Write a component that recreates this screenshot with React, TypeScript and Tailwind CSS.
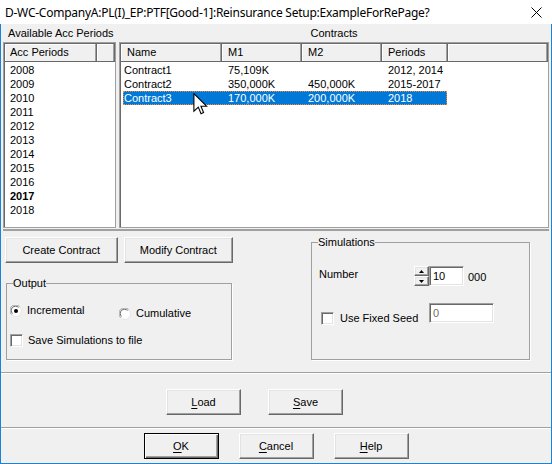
import React from 'react';

const b3d =
  'flex items-center justify-center bg-[#f0f0f0] border border-t-white border-l-white border-r-[#696969] border-b-[#696969] shadow-[inset_-1px_-1px_0_#a0a0a0,inset_1px_1px_0_#e3e3e3]';
const sunken =
  'bg-white border border-t-[#a0a0a0] border-l-[#a0a0a0] border-r-white border-b-white shadow-[inset_1px_1px_0_#696969,inset_-1px_-1px_0_#e3e3e3]';
const hcell =
  'h-full flex items-center border-r border-[#696969] shadow-[inset_-1px_0_0_#a0a0a0,inset_1px_1px_0_#fff]';

function Radio({ checked }: { checked?: boolean }) {
  return (
    <svg width="12" height="12" viewBox="0 0 12 12" className="shrink-0">
      <circle cx="6" cy="6" r="5.5" fill="#fff" stroke="#e3e3e3" />
      <path d="M1.5 9.5 A5.5 5.5 0 0 1 9.5 1.5" fill="none" stroke="#a0a0a0" />
      <path d="M2.5 8.5 A4.2 4.2 0 0 1 8.5 2.5" fill="none" stroke="#696969" />
      {checked && <circle cx="6" cy="6" r="2" fill="#000" />}
    </svg>
  );
}

function Check() {
  return <div className={`w-[13px] h-[13px] shrink-0 ${sunken}`} />;
}

function U({ c }: { c: string }) {
  return <span className="underline underline-offset-2">{c}</span>;
}

const years = ['2008', '2009', '2010', '2011', '2012', '2013', '2014', '2015', '2016', '2017', '2018'];
const contracts = [
  { n: 'Contract1', m1: '75,109K', m2: '', p: '2012, 2014', sel: false },
  { n: 'Contract2', m1: '350,000K', m2: '450,000K', p: '2015-2017', sel: false },
  { n: 'Contract3', m1: '170,000K', m2: '200,000K', p: '2018', sel: true },
];

export default function App() {
  return (
    <div className="relative w-[552px] h-[464px] flex flex-col overflow-hidden bg-[#f0f0f0] text-black text-[11px] leading-[13px] font-['Liberation_Sans',Arial,sans-serif]">
      {/* Title bar */}
      <div className="h-[24px] shrink-0 bg-white flex items-center justify-between pl-[5px]">
        <span className="text-[12px] font-['Noto_Sans','Open_Sans',sans-serif] tracking-[-0.25px]">
          D-WC-CompanyA:PL(I)_EP:PTF[Good-1]:Reinsurance Setup:ExampleForRePage?
        </span>
        <div className="w-[32px] h-[24px] flex items-center justify-center">
          <svg width="11" height="11" viewBox="0 0 11 11">
            <path d="M0.5 0.5L10.5 10.5M10.5 0.5L0.5 10.5" stroke="#000" strokeWidth="1" />
          </svg>
        </div>
      </div>

      {/* Body */}
      <div className="flex-1 flex flex-col border-x border-b border-[#1883d7]">
        {/* Top panes */}
        <div className="flex h-[204px] shrink-0">
          <div className="ml-[2px] w-[113px] flex flex-col">
            <div className="h-[18px] flex items-center pl-[5px]">Available Acc Periods</div>
            <div className="flex-1 flex flex-col bg-white border border-[#a0a0a0] shadow-[inset_1px_1px_0_#696969]">
              <div className="h-[18px] flex border-b border-[#696969] bg-[#f0f0f0] ml-[1px] mt-[1px]">
                <div className={`${hcell} w-[92px] pl-[5px]`}>Acc Periods</div>
                <div className={`${hcell} flex-1`} />
              </div>
              <div className="pt-[1px] flex flex-col">
                {years.map((y) => (
                  <div key={y} className={`h-[14px] leading-[14px] pl-[6px] ${y === '2017' ? 'font-bold' : ''}`}>
                    {y}
                  </div>
                ))}
              </div>
            </div>
          </div>
          <div className="ml-[3px] w-[430px] flex flex-col">
            <div className="h-[18px] flex items-center justify-center">Contracts</div>
            <div className="flex-1 flex flex-col bg-white border border-[#a0a0a0] shadow-[inset_1px_1px_0_#696969]">
              <div className="h-[18px] flex border-b border-[#696969] bg-[#f0f0f0] ml-[1px] mt-[1px]">
                <div className={`${hcell} w-[101px] pl-[6px]`}>Name</div>
                <div className={`${hcell} w-[80px] pl-[6px]`}>M1</div>
                <div className={`${hcell} w-[80px] pl-[6px]`}>M2</div>
                <div className={`${hcell} w-[66px] pl-[6px]`}>Periods</div>
                <div className={`${hcell} flex-1`} />
              </div>
              <div className="pt-[1px] flex flex-col">
                {contracts.map((c) => (
                  <div
                    key={c.n}
                    className={`ml-[3px] w-[324px] h-[14px] leading-[12px] flex border ${
                      c.sel ? 'bg-[#0078d7] text-white border-dotted border-[#ff8728]' : 'border-transparent'
                    }`}
                  >
                    <div className="w-[97px]">{c.n}</div>
                    <div className="w-[80px] pl-[7px]">{c.m1}</div>
                    <div className="w-[80px] pl-[7px]">{c.m2}</div>
                    <div className="flex-1 pl-[7px]">{c.p}</div>
                  </div>
                ))}
              </div>
            </div>
          </div>
        </div>

        {/* Splitter */}
        <div className="h-[5px] shrink-0 pt-[1px] px-[2px]">
          <div className="h-[2px] bg-[#a0a0a0]" />
        </div>

        {/* Middle */}
        <div className="h-[139px] shrink-0 flex">
          <div className="ml-[4px] w-[228px] flex flex-col">
            <div className="mt-[4px] flex gap-[6px]">
              <div className={`${b3d} w-[113px] h-[26px]`}>Create Contract</div>
              <div className={`${b3d} w-[110px] h-[26px]`}>Modify Contract</div>
            </div>
            <fieldset className="mt-[14px] ml-[1px] w-[226px] h-[83px] border border-[#a0a0a0] shadow-[1px_1px_0_#fff] min-w-0">
              <legend className="ml-[6px] px-0 leading-[13px] bg-[#f0f0f0]">Output</legend>
              <div className="pl-[3px] flex flex-col">
                <div className="mt-[14px] flex items-start">
                  <div className="w-[109px] flex items-center gap-[5px]">
                    <Radio checked />
                    <span>Incremental</span>
                  </div>
                  <div className="mt-[3px] flex items-center gap-[5px]">
                    <Radio />
                    <span>Cumulative</span>
                  </div>
                </div>
                <div className="mt-[14px] flex items-center gap-[5px]">
                  <Check />
                  <span>Save Simulations to file</span>
                </div>
              </div>
            </fieldset>
          </div>
          <fieldset className="ml-[78px] mt-[3px] w-[219px] h-[124px] border border-[#a0a0a0] shadow-[1px_1px_0_#fff] min-w-0">
            <legend className="ml-[6px] px-0 leading-[13px] bg-[#f0f0f0]">Simulations</legend>
            <div className="flex flex-col">
              <div className="mt-[17px] flex items-start">
                <div className="w-[102px] pl-[7px] mt-[2px]">Number</div>
                <div className="flex flex-col w-[15px]">
                  <div className={`${b3d} h-[10px]`}>
                    <svg width="5" height="3" viewBox="0 0 5 3">
                      <path d="M2.5 0L5 3H0z" fill="#000" />
                    </svg>
                  </div>
                  <div className={`${b3d} h-[10px]`}>
                    <svg width="5" height="3" viewBox="0 0 5 3">
                      <path d="M0 0H5L2.5 3z" fill="#000" />
                    </svg>
                  </div>
                </div>
                <div className={`${sunken} w-[35px] h-[20px] pl-[3px] flex items-center`}>10</div>
                <div className="ml-[4px] mt-[5px]">000</div>
              </div>
              <div className="mt-[17px] flex items-start">
                <div className="w-[117px] pl-[9px] mt-[9px] flex items-center gap-[6px]">
                  <Check />
                  <span>Use Fixed Seed</span>
                </div>
                <div className={`${sunken} w-[65px] h-[20px] pl-[3px] flex items-center text-[#6d6d6d]`}>0</div>
              </div>
            </div>
          </fieldset>
        </div>

        {/* Separator */}
        <div className="h-[2px] shrink-0 border-t border-[#a0a0a0] border-b border-b-white" />

        {/* Load / Save */}
        <div className="h-[53px] shrink-0 flex items-start pt-[15px] pl-[165px] gap-[27px]">
          <div className={`${b3d} w-[75px] h-[26px]`}>
            <span>
              <U c="L" />
              oad
            </span>
          </div>
          <div className={`${b3d} w-[75px] h-[26px]`}>
            <span>
              <U c="S" />
              ave
            </span>
          </div>
        </div>

        {/* Separator */}
        <div className="h-[2px] shrink-0 border-t border-[#a0a0a0] border-b border-b-white" />

        {/* OK Cancel Help */}
        <div className="flex-1 flex justify-center items-start pt-[4px] gap-[20px]">
          <div className="w-[75px] h-[26px] flex items-center justify-center bg-[#f0f0f0] border border-black shadow-[inset_1px_1px_0_#fff,inset_-1px_-1px_0_#696969,inset_-2px_-2px_0_#a0a0a0]">
            <span>
              <U c="O" />K
            </span>
          </div>
          <div className={`${b3d} w-[75px] h-[26px]`}>
            <span>
              <U c="C" />
              ancel
            </span>
          </div>
          <div className={`${b3d} w-[75px] h-[26px]`}>
            <span>
              <U c="H" />
              elp
            </span>
          </div>
        </div>
      </div>

      {/* Mouse cursor */}
      <svg className="absolute left-[193px] top-[93px]" width="15" height="22" viewBox="0 0 13 20">
        <path
          d="M0.5 0.5 L0.5 16.5 L4.5 12.8 L7 18.8 L9.3 17.8 L6.9 12 L12 12 Z"
          fill="#fff"
          stroke="#000"
          strokeWidth="1"
          strokeLinejoin="miter"
        />
      </svg>
    </div>
  );
}
